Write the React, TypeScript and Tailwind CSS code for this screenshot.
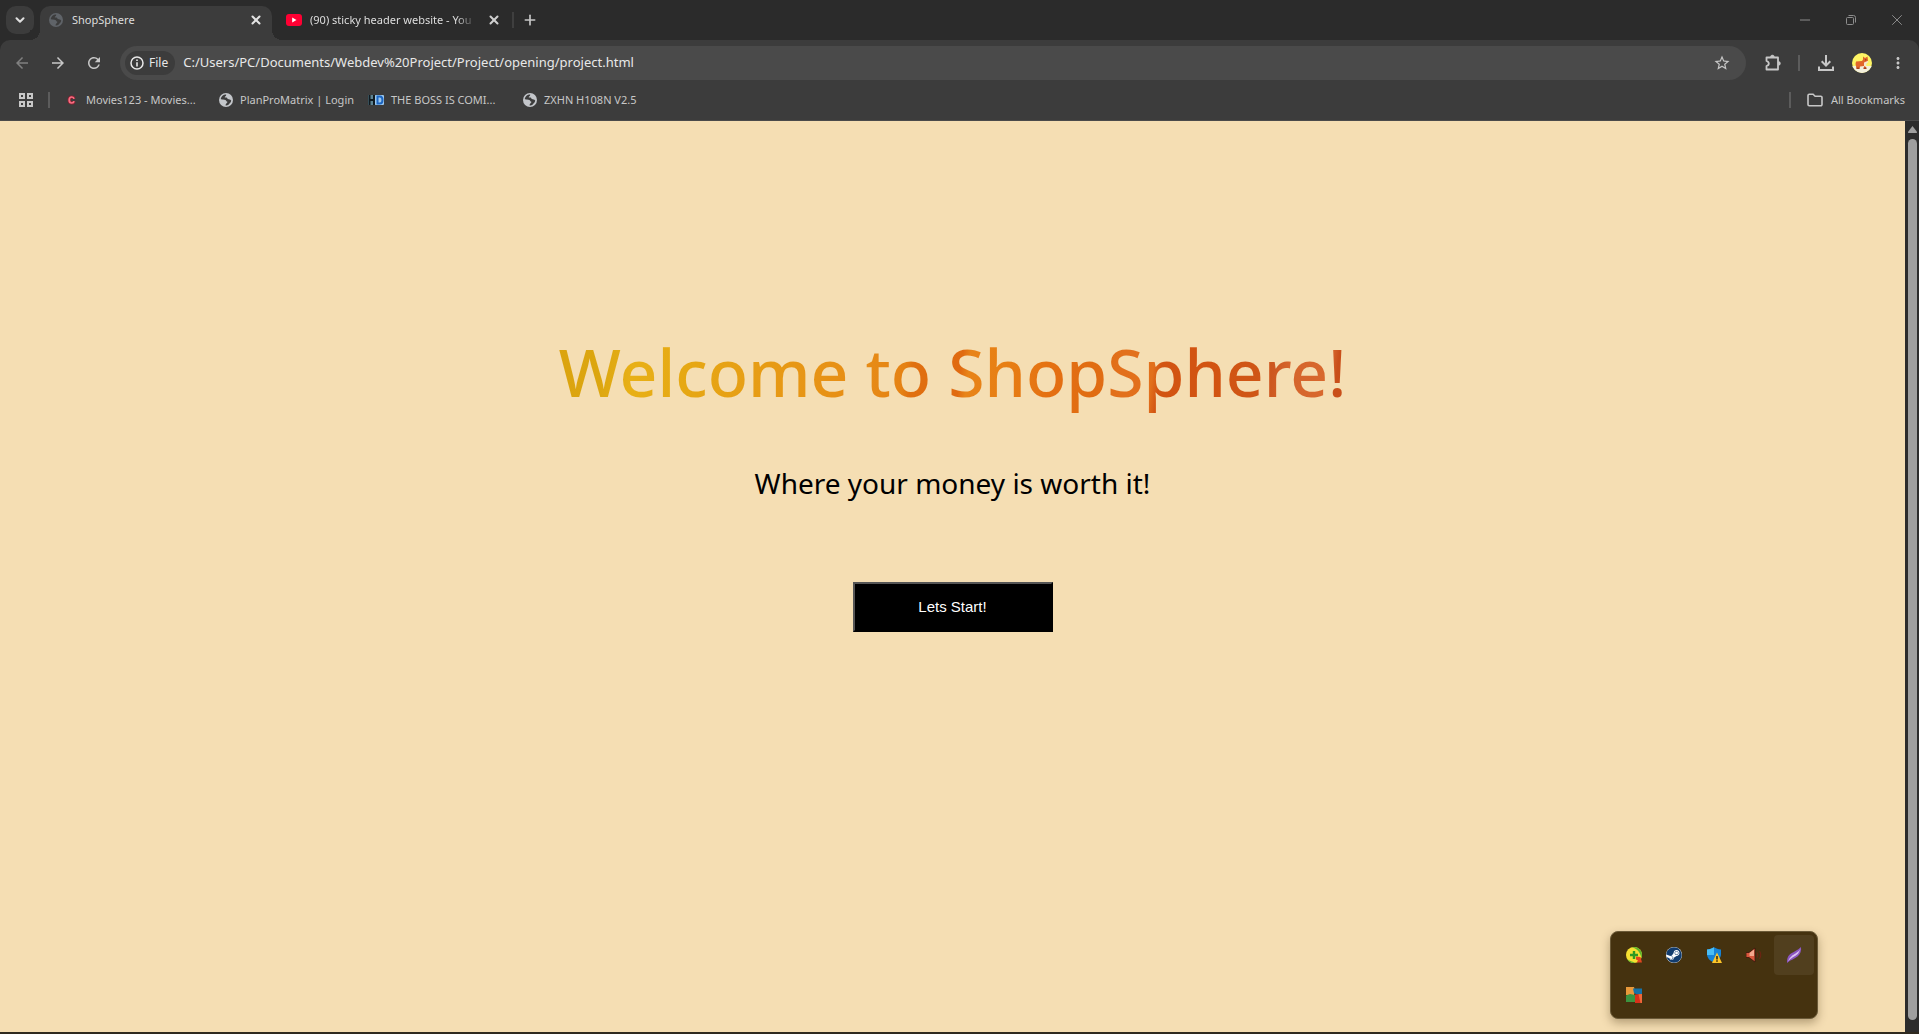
import type { ReactNode, SVGProps } from "react";
import { ChevronDown, Minus, Plus, X } from "lucide-react";
import { FaSteam } from "react-icons/fa";
import { MdArrowBack, MdArrowForward, MdMoreVert, MdRefresh, MdStarBorder } from "react-icons/md";

type IconProps = SVGProps<SVGSVGElement>;

function GlobeIcon(props: IconProps) {
  return (
    <svg viewBox="0 0 14 14" aria-hidden="true" {...props}>
      <circle cx="7" cy="7" r="7" fill="currentColor" />
      <path
        d="M7.2 1.6C4.6 1.4 2.2 3.3 1.7 6c1.6 1 3.4.4 4.8 1 .9.5.6 1.700 1.900 1.800 .2 1.300-1.600 1.200-1.800 3.600 1.100.1 2.200-.1 3.200-.8 .2-1.600 2.300-1.700 2.400-4.200-.9-1.200-2.300-.9-3.300-1.400-1.100-.5-.3-1.200-1.500-1.400-.9-.2-1.300.1-1.700-.4.100-1 1.700-.7 1.500-2.600Z"
        fill="#3c3c3c"
      />
    </svg>
  );
}

function YoutubeIcon(props: IconProps) {
  return (
    <svg viewBox="0 0 16 12" aria-hidden="true" {...props}>
      <rect width="16" height="12" rx="3" fill="#ff0033" />
      <path d="M6.200 3.500v5L10.500 6Z" fill="#fff" />
    </svg>
  );
}

function InfoIcon(props: IconProps) {
  return (
    <svg viewBox="0 0 14 14" aria-hidden="true" {...props}>
      <circle cx="7" cy="7" r="6" fill="none" stroke="currentColor" strokeWidth="1.500" />
      <path d="M6.200 6.200h1.600v4.200H6.200zM6.200 3.500h1.600v1.500H6.200z" fill="currentColor" />
    </svg>
  );
}

function ExtensionIcon(props: IconProps) {
  return (
    <svg viewBox="0 0 18 18" fill="none" aria-hidden="true" {...props}>
      <path
        d="M2.500 3.500H14V15.500H2.500V12C4 11.600 4.800 10.700 4.800 9.500S4 7.400 2.500 7Z"
        stroke="currentColor"
        strokeWidth="1.800"
        strokeLinejoin="round"
      />
      <path d="M6.500 3a1.900 1.900 0 0 1 3.800 0ZM14.500 7.500a1.900 1.900 0 0 1 0 3.800Z" fill="currentColor" stroke="currentColor" strokeWidth=".6" />
    </svg>
  );
}

function DownloadIcon(props: IconProps) {
  return (
    <svg viewBox="0 0 18 18" fill="none" stroke="currentColor" strokeWidth="2" aria-hidden="true" {...props}>
      <path d="M9 1v10.500M4.700 7.300 9 11.600l4.300-4.300M2 12.500V16h14v-3.500" />
    </svg>
  );
}

function FolderIcon(props: IconProps) {
  return (
    <svg viewBox="0 0 16 14" fill="none" aria-hidden="true" {...props}>
      <path
        d="M1 2.500A1.200 1.200 0 0 1 2.200 1.300h3.900l2 2h5.700A1.200 1.200 0 0 1 15 4.500v7a1.200 1.200 0 0 1-1.200 1.200H2.200A1.200 1.200 0 0 1 1 11.500Z"
        stroke="currentColor"
        strokeWidth="1.600"
      />
    </svg>
  );
}

function AppsIcon(props: IconProps) {
  return (
    <svg viewBox="0 0 14 14" fill="none" stroke="currentColor" strokeWidth="2" aria-hidden="true" {...props}>
      <path d="M1 1h4v4H1zM9 1h4v4H9zM1 9h4v4H1zM9 9h4v4H9z" />
    </svg>
  );
}

function RestoreIcon(props: IconProps) {
  return (
    <svg viewBox="0 0 10 10" fill="none" stroke="currentColor" aria-hidden="true" {...props}>
      <rect x=".5" y="2.500" width="7" height="7" rx="1" />
      <path d="M2.500 .5h5a2 2 0 0 1 2 2v5" />
    </svg>
  );
}

function ProfilePicture(props: IconProps) {
  return (
    <svg viewBox="0 0 20 20" aria-hidden="true" {...props}>
      <defs>
        <clipPath id="profile-clip">
          <circle cx="10" cy="10" r="10" />
        </clipPath>
      </defs>
      <g clipPath="url(#profile-clip)">
        <rect width="20" height="20" fill="#fdf464" />
        <rect y="13" width="20" height="7" fill="#f3f0de" />
        <path d="M4 8.500 10 8l1-1.500V3.500l2 1.500 2.500-1.500.5 4-2 3v5h-2v-2.500l-4 .5-.5 2H4.500L3.500 11Z" fill="#e0652a" />
        <path d="M12 9.500 15.500 8l1 1-2 1.500-.5 3.500-2-1Z" fill="#f7e6cf" />
        <path d="M4.500 14.500h3v1.500h-3zM11.500 14.500h3v1.500h-3z" fill="#a8421c" />
        <circle cx="13.800" cy="6.800" r=".6" fill="#5a2413" />
      </g>
    </svg>
  );
}

function CLetterIcon() {
  return (
    <svg viewBox="0 0 16 16" className="size-4" aria-hidden="true">
      <path d="M10 6.800C9.800 5.600 9 5 7.800 5 6.200 5 5.200 6.200 5.200 8s1 3 2.600 3c1.200 0 2-.6 2.200-1.800" fill="none" stroke="#8c2032" strokeWidth="3.200" />
      <path d="M10 6.800C9.800 5.600 9 5 7.800 5 6.200 5 5.200 6.200 5.200 8s1 3 2.600 3c1.200 0 2-.6 2.200-1.800" fill="none" stroke="#f66f82" strokeWidth="1.700" />
    </svg>
  );
}

function HdIcon() {
  return (
    <svg viewBox="0 0 16 10" className="h-2.5 w-4" aria-hidden="true">
      <rect width="8" height="10" fill="#5d8391" />
      <rect x="7" width="9" height="10" rx="1" fill="#9cc8ee" />
      <path d="M1.500 0v10M6 0v10M1.500 5H6" stroke="#101a20" strokeWidth="2" />
      <path d="M9.500 1.500h2.500c3.300 0 3.300 7 0 7H9.500Z" fill="none" stroke="#1d66c2" strokeWidth="2" />
    </svg>
  );
}

function DownloadManagerIcon() {
  return (
    <svg viewBox="0 0 16 16" className="size-4" aria-hidden="true">
      <circle cx="8" cy="8" r="8" fill="#f6e032" />
      <path d="M8 0a8 8 0 0 1 8 8c0 1-.2 2-.5 2.800C14 6 12 2 6 .3A8 8 0 0 1 8 0ZM1 11.700A8 8 0 0 0 9 16c-1-1.500-5-1.500-8-4.300Z" fill="#5eb52e" />
      <path d="M6.800 4h2.400v2.800H12v2.400H9.200V12H6.800V9.200H4V6.800h2.800Z" fill="#2f9a24" />
      <path d="m10 9.500 4.500.5L16 15.500h-5.500L12 13.500l-2-1Z" fill="#e2461f" />
    </svg>
  );
}

function SteamIcon() {
  return (
    <span className="flex size-4 rounded-full bg-white">
      <FaSteam className="size-4 text-[#123c6e]" aria-hidden="true" />
    </span>
  );
}

function SecurityIcon() {
  return (
    <svg viewBox="0 0 16 16" className="size-4" aria-hidden="true">
      <path d="M1 2.500C4 2.500 6 1.500 8 .3c2 1.200 4 2.200 7 2.200V7c0 4-3 7-7 8.500C4 14 1 11 1 7Z" fill="#1583d6" />
      <path d="M1 2.500C4 2.500 6 1.500 8 .3V8H1Z" fill="#49bdf4" />
      <path d="M11 5.500 16 16H6Z" fill="#fdc528" />
      <path d="M10.300 9h1.400v3.500h-1.400zM10.300 13.300h1.400v1.500h-1.400z" fill="#1b1608" />
    </svg>
  );
}

function SpeakerIcon() {
  return (
    <svg viewBox="0 0 16 16" className="size-4" aria-hidden="true">
      <path d="M0 5.500h3L9 1v14L3 10.500H0Z" fill="#d9583c" stroke="#3a130a" strokeWidth=".8" />
      <path d="M3.500 6 8 2.500v6.500L3.500 9Z" fill="#f4a88d" />
      <path d="M11 5.500q1.500 2.500 0 5M13.500 4q2.500 4 0 8" fill="none" stroke="#6e2413" strokeWidth="1.100" />
    </svg>
  );
}

function FeatherIcon() {
  return (
    <svg viewBox="0 0 16 16" className="size-4" aria-hidden="true">
      <path d="M1 16c0-5 1-7.500 4-9.500S11.500 3.500 15 0c.5 4-.5 7-3.500 9.500S5 12.500 1 16Z" fill="#8a55bf" />
      <path d="M2 14.500C4 9.500 7 8 9.500 6.500S13.500 3.500 14.500 1.500C13 6 11.500 7.500 9 9S4.500 11.500 2 14.500Z" fill="#dcc3f2" />
    </svg>
  );
}

function BlocksIcon() {
  return (
    <svg viewBox="0 0 16 16" className="size-4" aria-hidden="true">
      <path d="M0 0h8l1 4-1 4H0Z" fill="#e9993a" />
      <path d="M7 1.500h9V8l-5-.5L8 6Z" fill="#1672a8" />
      <path d="M0 8.500 4 7l5 1v7H0Z" fill="#3c9440" />
      <path d="M9 7.500 16 7v9H9Z" fill="#d8301a" />
      <path d="M12.500 7.300 16 7v9h-1.500Z" fill="#f0673a" />
    </svg>
  );
}

function IconButton({ label, className = "", children }: { label: string; className?: string; children: ReactNode }) {
  return (
    <button type="button" aria-label={label} className={`flex shrink-0 items-center justify-center ${className}`}>
      {children}
    </button>
  );
}

const bookmarks = [
  { title: "Movies123 - Movies...", width: "w-[155px] gap-1.5", icon: <CLetterIcon /> },
  { title: "PlanProMatrix | Login", width: "w-[149px] gap-[7px]", icon: <GlobeIcon className="size-3.5 text-[#c3c6ca]" /> },
  { title: "THE BOSS IS COMI...", width: "w-[155px] gap-[7px]", icon: <HdIcon /> },
  { title: "ZXHN H108N V2.5", width: "w-[130px] gap-[7px]", icon: <GlobeIcon className="size-3.5 text-[#c3c6ca]" /> },
];

const trayItems = [
  { label: "Download manager", icon: <DownloadManagerIcon /> },
  { label: "Steam", icon: <SteamIcon /> },
  { label: "Windows Security", icon: <SecurityIcon /> },
  { label: "Volume", icon: <SpeakerIcon /> },
  { label: "Screenshot tool", icon: <FeatherIcon />, active: true },
  { label: "Emulator", icon: <BlocksIcon /> },
];

function TabStrip() {
  return (
    <div className="flex h-10 items-end bg-[#2b2b2b] text-[11px] text-[#dedede]">
      <IconButton label="Search tabs" className="mb-1.5 ml-1.5 size-7 rounded-[10px] bg-[#3c3c3c]">
        <ChevronDown className="size-3.5" strokeWidth={3.5} />
      </IconButton>
      <div role="tablist" aria-label="Open tabs" className="flex items-end">
        <div className="relative ml-1.5 flex h-[34px] w-[232px] items-center rounded-t-[10px] bg-[#3c3c3c] pb-1.5 pl-[9px] pr-2">
          <span className="absolute -left-2.5 bottom-0 size-2.5 bg-[radial-gradient(circle_at_0_0,#2b2b2b_10px,#3c3c3c_10px)]" />
          <span className="absolute -right-2.5 bottom-0 size-2.5 bg-[radial-gradient(circle_at_100%_0,#2b2b2b_10px,#3c3c3c_10px)]" />
          <button type="button" role="tab" aria-selected="true" className="flex grow items-center gap-[9px] text-left">
            <GlobeIcon className="size-3.5 text-[#5f6368]" />
            ShopSphere
          </button>
          <IconButton label="Close ShopSphere" className="size-4 text-[#e3e3e3]">
            <X className="size-3.5" strokeWidth={3.5} />
          </IconButton>
        </div>
        <div className="flex h-[34px] w-[240px] items-center pb-1.5 pl-3.5 pr-2.5">
          <button type="button" role="tab" aria-selected="false" className="flex min-w-0 grow items-center gap-2 text-left">
            <YoutubeIcon className="h-3 w-4 shrink-0" />
            <span className="whitespace-nowrap [mask-image:linear-gradient(to_right,#000_146px,#0003)]">
              (90) sticky header website - You
            </span>
          </button>
          <IconButton label="Close YouTube tab" className="size-4 text-[#cfcfcf]">
            <X className="size-3.5" strokeWidth={3.5} />
          </IconButton>
        </div>
      </div>
      <div className="mb-3 h-4 w-0.5 bg-[#3f3f3f]" />
      <IconButton label="New tab" className="mb-3 ml-2 size-4 text-[#c7c7c7]">
        <Plus className="size-4" strokeWidth={2.5} />
      </IconButton>
      <div className="ml-auto flex self-start text-[#8d8d8d]">
        <IconButton label="Minimize" className="h-10 w-[46px]">
          <Minus className="size-4" strokeWidth={1.5} />
        </IconButton>
        <IconButton label="Restore" className="h-10 w-[46px]">
          <RestoreIcon className="size-2.5" />
        </IconButton>
        <IconButton label="Close window" className="h-10 w-[45px]">
          <X className="size-[18px]" strokeWidth={1.3} />
        </IconButton>
      </div>
    </div>
  );
}

function Toolbar() {
  return (
    <div className="flex h-[46px] items-center rounded-t-[10px] bg-[#3c3c3c] pr-3 text-[#c7c7c7]">
      <IconButton label="Back" className="ml-3.5 size-4 text-[#808080]">
        <MdArrowBack className="size-[18px] shrink-0" />
      </IconButton>
      <IconButton label="Forward" className="ml-5 size-4">
        <MdArrowForward className="size-[18px] shrink-0" />
      </IconButton>
      <IconButton label="Reload" className="ml-5 size-4">
        <MdRefresh className="size-[18px] shrink-0" />
      </IconButton>
      <form className="ml-[18px] flex h-[34px] grow items-center rounded-full bg-[#4a4a4a] pl-[5px] pr-4 text-[#e8e8e8]">
        <button type="button" className="flex h-6 items-center gap-[5px] rounded-full bg-[#3c3c3c] pl-[5px] pr-[7px] text-xs">
          <InfoIcon className="size-3.5" />
          File
        </button>
        <input
          type="text"
          aria-label="Address"
          defaultValue="C:/Users/PC/Documents/Webdev%20Project/Project/opening/project.html"
          className="ml-2 min-w-0 grow bg-transparent text-[13px] outline-none"
        />
        <IconButton label="Bookmark this page" className="size-4 text-[#c7c7c7]">
          <MdStarBorder className="size-[18px] shrink-0" />
        </IconButton>
      </form>
      <IconButton label="Extensions" className="ml-[18px] size-[18px]">
        <ExtensionIcon className="size-[18px]" />
      </IconButton>
      <div className="ml-4 h-4 w-0.5 bg-[#5c5c5c]" />
      <IconButton label="Downloads" className="ml-[17px] size-[18px]">
        <DownloadIcon className="size-[18px]" />
      </IconButton>
      <IconButton label="Profile" className="ml-[17px] size-5">
        <ProfilePicture className="size-5" />
      </IconButton>
      <IconButton label="Browser menu" className="ml-[17px] size-[18px]">
        <MdMoreVert className="size-[18px]" />
      </IconButton>
    </div>
  );
}

function BookmarksBar() {
  return (
    <nav aria-label="Bookmarks" className="flex h-[35px] items-center border-b border-[#4a4a4a] bg-[#3c3c3c] pb-1.5 text-[11px] text-[#c7c7c7]">
      <IconButton label="Apps" className="ml-[19px] size-3.5">
        <AppsIcon className="size-3.5" />
      </IconButton>
      <div className="ml-[15px] mr-3.5 h-4 w-0.5 bg-[#5c5c5c]" />
      {bookmarks.map((b) => (
        <a key={b.title} href="#" className={`flex shrink-0 items-center whitespace-nowrap ${b.width}`}>
          {b.icon}
          {b.title}
        </a>
      ))}
      <div className="ml-auto mr-4 h-4 w-0.5 bg-[#5c5c5c]" />
      <button type="button" className="mr-3.5 flex items-center gap-2">
        <FolderIcon className="h-3.5 w-4" />
        All Bookmarks
      </button>
    </nav>
  );
}

function Tray() {
  return (
    <div className="fixed bottom-[15px] right-[101px] grid grid-cols-5 rounded-lg border border-[#6b5a38] bg-[#45320f] p-[3px] shadow-[0_4px_10px_rgba(60,40,10,0.35)]">
      {trayItems.map((item) => (
        <IconButton key={item.label} label={item.label} className={`size-10 rounded ${item.active ? "bg-[#513f1e]" : ""}`}>
          {item.icon}
        </IconButton>
      ))}
    </div>
  );
}

export default function App() {
  return (
    <div className="flex h-screen flex-col overflow-hidden bg-[#2b2b2b] font-['Noto_Sans','Open_Sans',sans-serif]">
      <header>
        <TabStrip />
        <Toolbar />
        <BookmarksBar />
      </header>
      <div className="flex min-h-0 grow border-b-2 border-[#2f2a1f]">
        <main className="flex grow flex-col items-center bg-[#f5deb3] pt-[200px] text-center text-black">
          <h1 className="bg-[linear-gradient(98deg,#dba30e_0%,#dca60f_6%,#e8b016_10%,#e6a914_16%,#e79a15_28%,#e78c16_39%,#e58214_44%,#e07010_45%,#e06a10_51%,#e88418_52%,#e77e14_57%,#e46f12_63%,#e06c12_68%,#e2701c_71%,#e2701c_75%,#d25412_76%,#d25412_83%,#cf5616_88%,#cd5820_90%,#d5652c_92%,#d8682e_97%,#c94f1a_98%)] bg-clip-text text-[66px] font-medium leading-[100px] text-transparent">
            Welcome to ShopSphere!
          </h1>
          <p className="mt-[42px] text-[28px] leading-10">Where your money is worth it!</p>
          <button
            type="button"
            className="mt-[79px] h-[50px] w-[200px] border-2 border-b-black border-l-[#555] border-r-black border-t-[#555] bg-black font-['Liberation_Sans',sans-serif] text-[15px] text-white"
          >
            Lets Start!
          </button>
        </main>
        <div className="flex w-3.5 flex-col bg-[#2c2c2c] pb-3 pl-[3px]" aria-hidden="true">
          <svg viewBox="0 0 10 8" className="mb-1.5 mt-[5px] h-[7px] w-[9px]" fill="#9f9f9f">
            <path d="M5 0 10 6.500V8H0V6.500Z" />
          </svg>
          <div className="w-[9px] grow rounded-full bg-[#9f9f9f]" />
        </div>
      </div>
      <Tray />
    </div>
  );
}
